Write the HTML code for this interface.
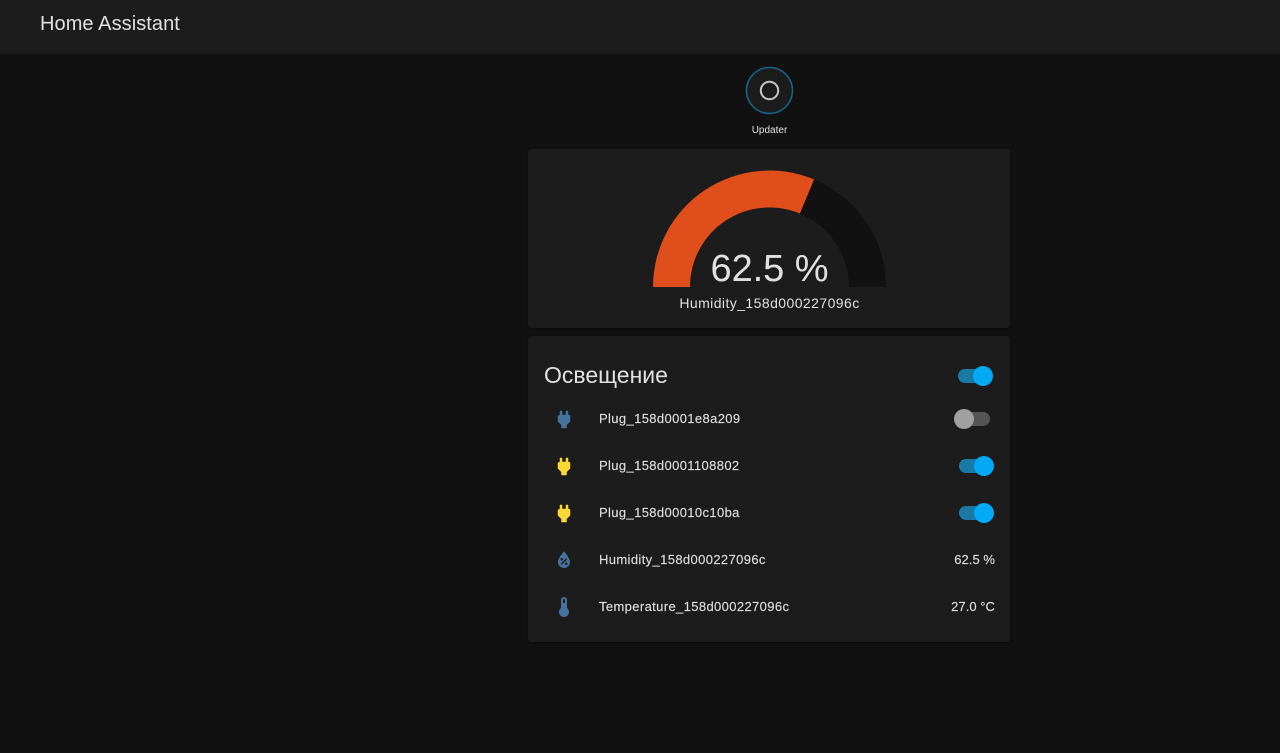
<!DOCTYPE html>
<html>
<head>
<meta charset="utf-8">
<style>
html,body{margin:0;padding:0;width:1280px;height:753px;overflow:hidden;background:#111111;font-family:"Liberation Sans",sans-serif;color:#e1e1e1}
div,svg{position:absolute}
.t{white-space:nowrap;font-size:14px;line-height:20px}
.r{font-size:13px;letter-spacing:.37px;color:#dedede;-webkit-text-stroke:.15px #dedede}
.v{font-size:13px;letter-spacing:.05px;color:#dedede;-webkit-text-stroke:.15px #dedede}
.card{background:#1c1c1c;border-radius:3px;left:528px;width:482px;box-shadow:0 1px 2px rgba(0,0,0,.4)}
.track{height:14px;border-radius:7px}
.thumb{width:20px;height:20px;border-radius:50%}
.on{background:#1b79a5}.onb{background:#03a9f4}
.off{background:#555555}.offb{background:#a0a0a0}
.i{stroke-width:.5;stroke-linejoin:round}
</style>
</head>
<body>
<div style="left:0;top:0;width:1280px;height:54px;background:#1c1c1c"></div>
<div class="t" style="left:40px;top:12px;font-size:20px;line-height:24px;letter-spacing:.07px">Home Assistant</div>

<svg style="left:745px;top:66px" width="49" height="49" viewBox="0 0 49 49">
<circle cx="24.5" cy="24.5" r="23" fill="#1c1c1c" stroke="#17658c" stroke-width="1.5"/>
<circle cx="24.5" cy="24.5" r="8.7" fill="none" stroke="#c8c8c8" stroke-width="2"/>
</svg>
<div class="t" style="left:729.5px;width:80px;text-align:center;top:123.5px;font-size:10px;line-height:14px">Updater</div>

<div class="card" style="top:149px;height:179px"></div>
<svg style="left:640px;top:160px" width="260" height="140" viewBox="640 160 260 140">
<path d="M653 287A116.5 116.5 0 0 1 886 287H849A79.5 79.5 0 0 0 690 287Z" fill="#111111"/>
<path d="M653 287A116.5 116.5 0 0 1 814.1 179.4L799.9 213.5A79.5 79.5 0 0 0 690 287Z" fill="#e04e1b"/>
</svg>
<div class="t" style="left:669.5px;width:200px;text-align:center;top:246px;font-size:38px;line-height:46px;letter-spacing:-.05px">62.5 %</div>
<div class="t" style="left:669.5px;width:200px;text-align:center;top:293px;letter-spacing:.43px">Humidity_158d000227096c</div>

<div class="card" style="top:336px;height:306px"></div>
<div class="t" style="left:544px;top:360px;font-size:23px;line-height:30px">Освещение</div>
<div class="track on" style="left:958px;top:369px;width:34px"></div>
<div class="thumb onb" style="left:973px;top:366px"></div>

<svg style="left:551.5px;top:407.5px" width="24" height="24" viewBox="0 0 24 24"><path class="i" fill="#44739e" stroke="#44739e" d="M16,7V3H14V7H10V3H8V7C7,7 6,8 6,8V13.5L9.5,17V20H14.5V17L18,13.5V8C18,7 17,7 16,7Z"/></svg>
<div class="t r" style="left:599px;top:409px">Plug_158d0001e8a209</div>
<div class="track off" style="left:956px;top:412px;width:34px"></div>
<div class="thumb offb" style="left:954px;top:409px"></div>

<svg style="left:551.5px;top:454.5px" width="24" height="24" viewBox="0 0 24 24"><path class="i" fill="#fdd835" stroke="#fdd835" d="M16,7V3H14V7H10V3H8V7C7,7 6,8 6,8V13.5L9.5,17V20H14.5V17L18,13.5V8C18,7 17,7 16,7Z"/></svg>
<div class="t r" style="left:599px;top:456px">Plug_158d0001108802</div>
<div class="track on" style="left:959px;top:459px;width:34px"></div>
<div class="thumb onb" style="left:974px;top:456px"></div>

<svg style="left:551.5px;top:501.5px" width="24" height="24" viewBox="0 0 24 24"><path class="i" fill="#fdd835" stroke="#fdd835" d="M16,7V3H14V7H10V3H8V7C7,7 6,8 6,8V13.5L9.5,17V20H14.5V17L18,13.5V8C18,7 17,7 16,7Z"/></svg>
<div class="t r" style="left:599px;top:503px">Plug_158d00010c10ba</div>
<div class="track on" style="left:959px;top:506px;width:34px"></div>
<div class="thumb onb" style="left:974px;top:503px"></div>

<svg style="left:551.5px;top:548px" width="24" height="24" viewBox="0 0 24 24"><path fill="#44739e" fill-rule="evenodd" d="M12,3.25C12,3.25 6,10 6,14C6,17.32 8.69,20 12,20A6,6 0 0,0 18,14C18,10 12,3.25 12,3.25ZM14.2,10.3L15.2,11.3L9.8,16.7L8.8,15.7ZM9.75,10A1.25,1.25 0 0,1 11,11.25A1.25,1.25 0 0,1 9.75,12.5A1.25,1.25 0 0,1 8.5,11.25A1.25,1.25 0 0,1 9.75,10ZM14.25,14.5A1.25,1.25 0 0,1 15.5,15.75A1.25,1.25 0 0,1 14.25,17A1.25,1.25 0 0,1 13,15.75A1.25,1.25 0 0,1 14.25,14.5Z"/></svg>
<div class="t r" style="left:599px;top:550px">Humidity_158d000227096c</div>
<div class="t v" style="right:285px;top:550px">62.5 %</div>

<svg style="left:551.5px;top:595px" width="24" height="24" viewBox="0 0 24 24"><path fill="#44739e" fill-rule="evenodd" d="M15 13V5A3 3 0 0 0 9 5V13A5 5 0 1 0 15 13ZM12 4A1 1 0 0 1 13 5V8H11V5A1 1 0 0 1 12 4Z"/></svg>
<div class="t r" style="left:599px;top:597px">Temperature_158d000227096c</div>
<div class="t v" style="right:285px;top:597px">27.0 °C</div>
</body>
</html>
